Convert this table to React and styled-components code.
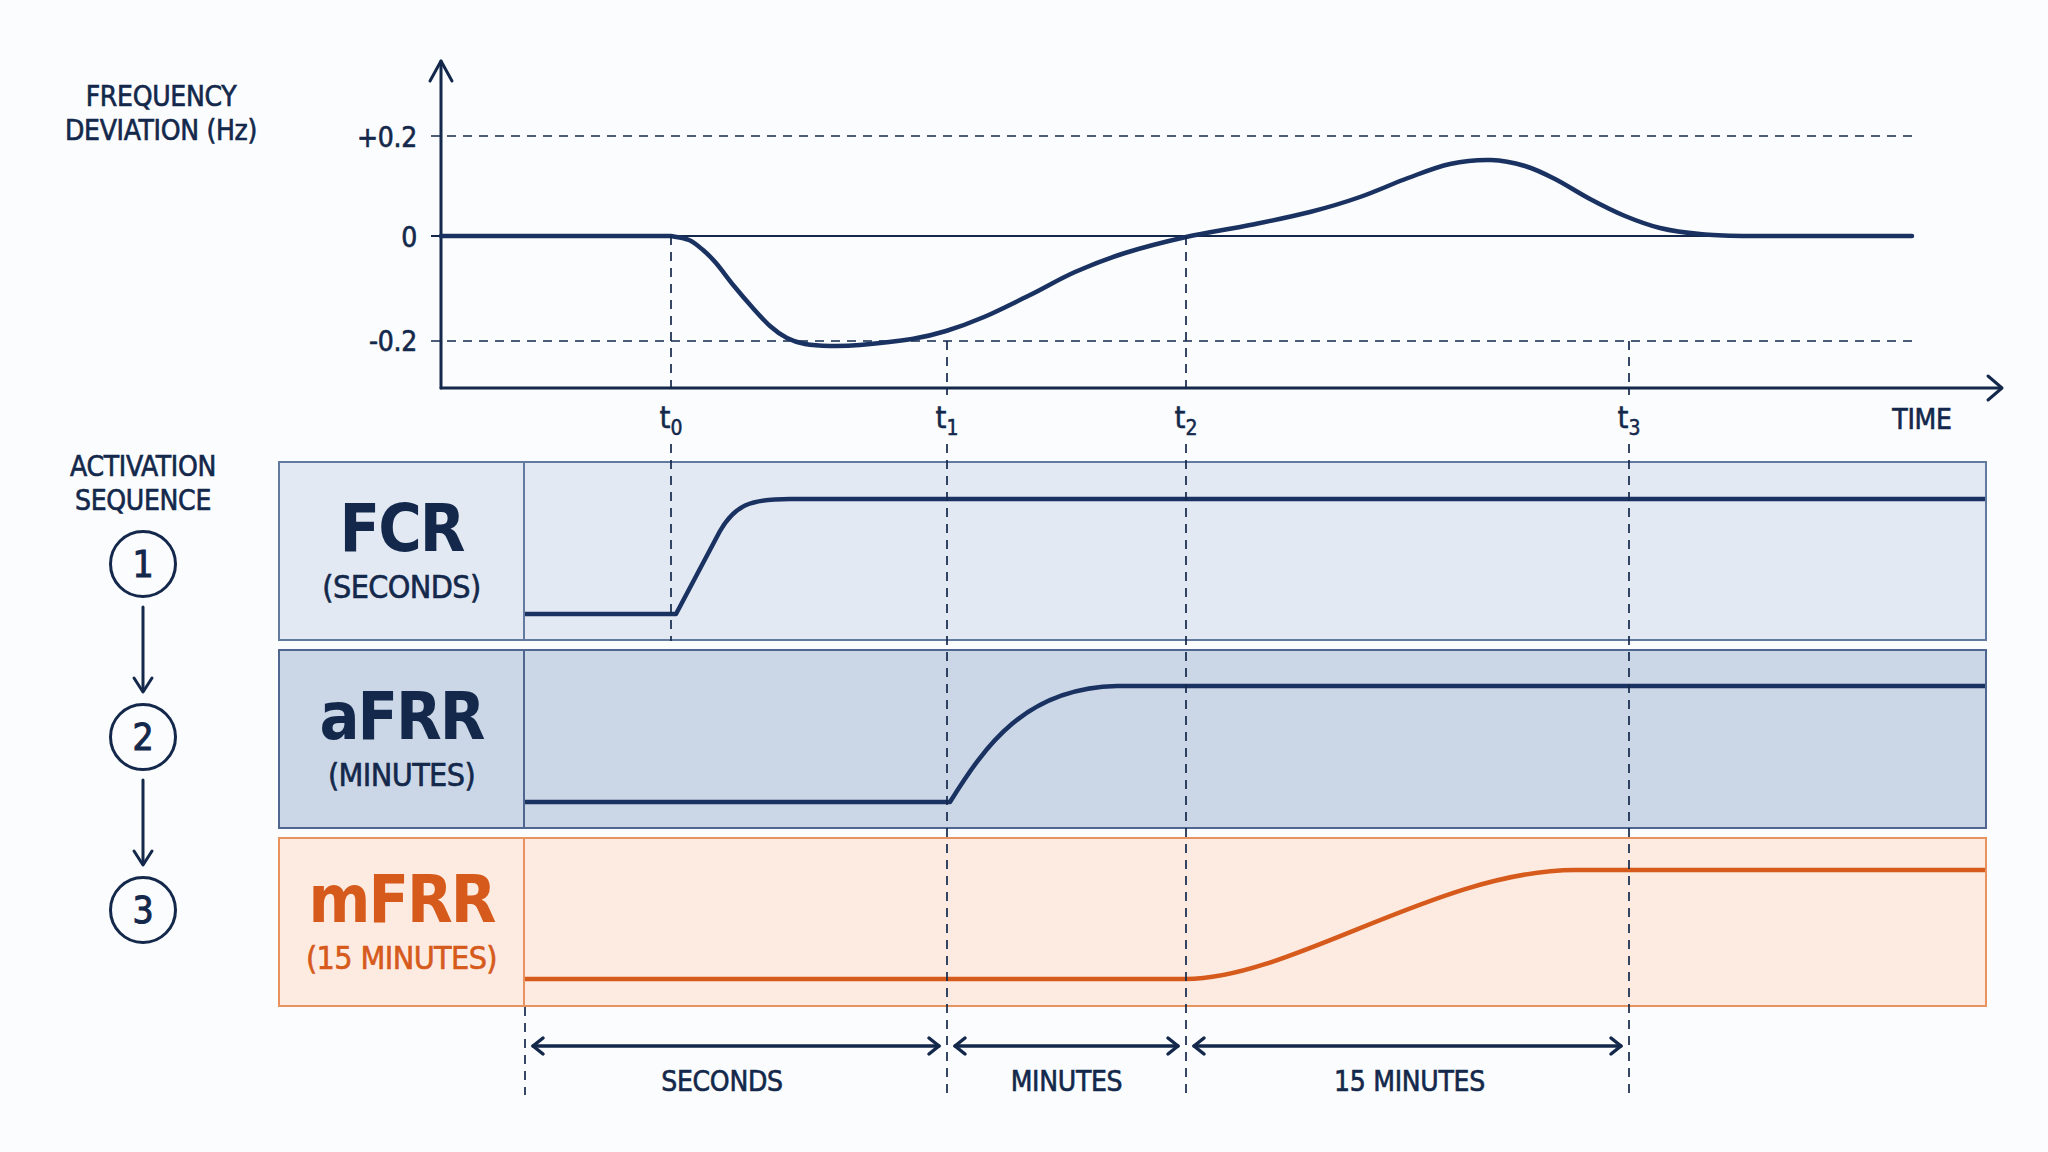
import React from "react";
import styled, { createGlobalStyle } from "styled-components";

const NAVY = "#13284b";
const LINE = "#1a3262";
const ORANGE = "#d65a1b";

const GlobalStyle = createGlobalStyle`
  html, body {
    margin: 0;
    padding: 0;
    background: #fbfcfd;
  }
  body {
    font-family: "DejaVu Sans Condensed", "Liberation Sans Narrow", "DejaVu Sans", sans-serif;
    color: ${NAVY};
  }
`;

const Page = styled.div`
  position: relative;
  width: 2048px;
  height: 1152px;
  overflow: hidden;
  background: #fbfcfd;
`;

// top part: axis title + frequency chart
const Header = styled.div`
  display: grid;
  grid-template-columns: 322px 1726px;
  height: 450px;
`;

const Caption = styled.div`
  text-align: center;
  font-size: 28px;
  line-height: 34px;
  letter-spacing: -0.3px;
  -webkit-text-stroke: 0.6px currentColor;
`;

const AxisTitle = styled(Caption)`
  padding-top: 80px;
`;

const TickLabel = styled.text`
  font-size: 28px;
  fill: ${NAVY};
  stroke: ${NAVY};
  stroke-width: 0.6px;
  letter-spacing: -0.3px;
`;

const TLabel = styled.text`
  font-size: 31px;
  fill: ${NAVY};
  stroke: ${NAVY};
  stroke-width: 0.5px;
`;

// middle part: sequence + panels
const Middle = styled.div`
  display: grid;
  grid-template-columns: 278px 1709px;
`;

const Sequence = styled.div`
  display: flex;
  flex-direction: column;
  align-items: center;
  padding: 0 0 0 8px;
`;

const SeqTitle = styled(Caption)`
  margin-bottom: 12px;
`;

const StepCircle = styled.div`
  box-sizing: border-box;
  width: 68px;
  height: 68px;
  border: 3px solid ${NAVY};
  border-radius: 50%;
  display: flex;
  align-items: center;
  justify-content: center;
  font-size: 37px;
  -webkit-text-stroke: 1px currentColor;
`;

const Panels = styled.div`
  display: flex;
  flex-direction: column;
  gap: 8px;
  padding-top: 11px;
`;

const tones = {
  light: { bg: "#e2e9f3", border: "#627a9f", text: NAVY },
  mid: { bg: "#cbd7e6", border: "#4f6690", text: NAVY },
  orange: { bg: "#fdebe1", border: "#e8935f", text: ORANGE },
};

const Panel = styled.div`
  box-sizing: border-box;
  display: flex;
  height: ${(p) => p.$h}px;
  background: ${(p) => tones[p.$tone].bg};
  border: 2px solid ${(p) => tones[p.$tone].border};
  color: ${(p) => tones[p.$tone].text};
`;

const LabelCell = styled.div`
  box-sizing: border-box;
  width: 245px;
  flex: none;
  border-right: 2px solid ${(p) => tones[p.$tone].border};
  display: flex;
  flex-direction: column;
  align-items: center;
  justify-content: center;
`;

const Name = styled.div`
  font-size: 66px;
  line-height: 64px;
  font-weight: 700;
  letter-spacing: -2px;
`;

const Sub = styled.div`
  font-size: 32px;
  line-height: 36px;
  margin-top: 8px;
  letter-spacing: -0.6px;
  -webkit-text-stroke: 0.6px currentColor;
`;

// bottom part: duration arrows
const Durations = styled.div`
  display: flex;
  margin-left: 525px;
  padding-top: 27px;
`;

const Span = styled.div`
  width: ${(p) => p.$w}px;
  display: flex;
  flex-direction: column;
  align-items: center;
`;

const SpanLabel = styled(Caption)`
  margin-top: 7px;
  margin-right: ${(p) => p.$shift || 0}px;
`;

const Guides = styled.svg`
  position: absolute;
  left: 0;
  top: 0;
  pointer-events: none;
`;

const smooth = (pts) => {
  let d = "";
  for (let i = 0; i < pts.length - 1; i++) {
    const p0 = pts[i - 1] || pts[i];
    const p1 = pts[i];
    const p2 = pts[i + 1];
    const p3 = pts[i + 2] || p2;
    const c1 = [p1[0] + (p2[0] - p0[0]) / 6, p1[1] + (p2[1] - p0[1]) / 6];
    const c2 = [p2[0] - (p3[0] - p1[0]) / 6, p2[1] - (p3[1] - p1[1]) / 6];
    d += ` C${c1[0].toFixed(1)},${c1[1].toFixed(1)} ${c2[0].toFixed(1)},${c2[1].toFixed(1)} ${p2[0]},${p2[1]}`;
  }
  return d;
};

const freqPoints = [
  [671, 236], [689, 240], [703, 250], [716, 263], [734, 286], [752, 307],
  [770, 326], [787, 338], [805, 344], [830, 346], [860, 345], [912, 339],
  [946, 331], [984, 317], [1030, 295], [1075, 272], [1125, 253],
  [1186, 237], [1250, 225], [1310, 212], [1360, 197], [1408, 178],
  [1450, 164], [1491, 160], [1525, 166], [1555, 179], [1590, 199],
  [1625, 216], [1660, 228], [1700, 234], [1750, 236], [1912, 236],
];

const freqPath = `M441,236 L671,236` + smooth(freqPoints);

const times = [
  { x: 671, sub: "0" },
  { x: 947, sub: "1" },
  { x: 1186, sub: "2" },
  { x: 1629, sub: "3" },
];

const dash = { stroke: NAVY, strokeWidth: 1.7, strokeDasharray: "9 7" };

function FrequencyChart() {
  return (
    <svg width="1726" height="450" viewBox="322 0 1726 450">
      <line x1="431" x2="1913" y1="136" y2="136" {...dash} />
      <line x1="431" x2="1913" y1="341" y2="341" {...dash} />
      <line x1="431" x2="1913" y1="236" y2="236" stroke={NAVY} strokeWidth="2" />

      <g stroke={NAVY} strokeWidth="3" fill="none" strokeLinecap="round" strokeLinejoin="round">
        <path d="M441,388 L441,61" />
        <path d="M430,81 L441,61 L452,81" />
        <path d="M441,388 L2001,388" />
        <path d="M1988,376 L2002,388 L1988,400" />
      </g>

      <TickLabel x="417" y="147" textAnchor="end">+0.2</TickLabel>
      <TickLabel x="417" y="247" textAnchor="end">0</TickLabel>
      <TickLabel x="417" y="351" textAnchor="end">-0.2</TickLabel>

      <path d={freqPath} stroke={LINE} strokeWidth="4.5" fill="none" strokeLinecap="round" />

      {times.map((t) => (
        <TLabel key={t.sub} x={t.x} y="428" textAnchor="middle">
          t<tspan fontSize="21" dy="7">{t.sub}</tspan>
        </TLabel>
      ))}
      <TickLabel x="1922" y="429" textAnchor="middle">TIME</TickLabel>
    </svg>
  );
}

function SeqArrow() {
  return (
    <svg width="24" height="105" viewBox="0 0 24 105">
      <g stroke={NAVY} strokeWidth="3" fill="none" strokeLinecap="round" strokeLinejoin="round">
        <path d="M12,9 L12,93" />
        <path d="M3,80 L12,94 L21,80" />
      </g>
    </svg>
  );
}

// one activation panel: label on the left, response curve on the right
function ReservePanel({ tone, height, name, sub, path }) {
  const inner = height - 4;
  return (
    <Panel $tone={tone} $h={height}>
      <LabelCell $tone={tone}>
        <Name>{name}</Name>
        <Sub>{sub}</Sub>
      </LabelCell>
      <svg width="1460" height={inner} viewBox={`525 0 1460 ${inner}`}>
        <path
          d={path}
          stroke={tone === "orange" ? ORANGE : LINE}
          strokeWidth="4.5"
          fill="none"
          strokeLinejoin="round"
        />
      </svg>
    </Panel>
  );
}

function DurationArrow({ w }) {
  const end = w - 8;
  return (
    <svg width={w} height="24" viewBox={`0 0 ${w} 24`}>
      <g stroke={NAVY} strokeWidth="3.5" fill="none" strokeLinecap="round" strokeLinejoin="round">
        <path d={`M8,12 L${end},12`} />
        <path d={`M18,4 L8,12 L18,20`} />
        <path d={`M${end - 10},4 L${end},12 L${end - 10},20`} />
      </g>
    </svg>
  );
}

const spans = [
  { w: 422, label: "SECONDS", shift: 28 },
  { w: 239, label: "MINUTES", shift: 0 },
  { w: 443, label: "15 MINUTES", shift: -4 },
];

// dashed time markers: [x, from, to]
const guideLines = [
  [671, 236, 641],
  [947, 341, 1095],
  [1186, 236, 1095],
  [1629, 341, 1095],
];

export default function App() {
  return (
    <Page>
      <GlobalStyle />
      <Header>
        <AxisTitle>
          FREQUENCY
          <br />
          DEVIATION (Hz)
        </AxisTitle>
        <FrequencyChart />
      </Header>

      <Middle>
        <Sequence>
          <SeqTitle>
            ACTIVATION
            <br />
            SEQUENCE
          </SeqTitle>
          <StepCircle>1</StepCircle>
          <SeqArrow />
          <StepCircle>2</StepCircle>
          <SeqArrow />
          <StepCircle>3</StepCircle>
        </Sequence>

        <Panels>
          <ReservePanel
            tone="light"
            height={180}
            name="FCR"
            sub="(SECONDS)"
            path="M525,151 L676,151 L720,68 C735,42 750,36 790,36 L1985,36"
          />
          <ReservePanel
            tone="mid"
            height={180}
            name="aFRR"
            sub="(MINUTES)"
            path="M525,151 L950,151 C985,95 1025,37 1117,35 L1985,35"
          />
          <ReservePanel
            tone="orange"
            height={170}
            name="mFRR"
            sub="(15 MINUTES)"
            path="M525,140 L1186,140 C1290,140 1440,31 1575,31 L1985,31"
          />
        </Panels>
      </Middle>

      <Durations>
        {spans.map((s) => (
          <Span key={s.label} $w={s.w}>
            <DurationArrow w={s.w} />
            <SpanLabel $shift={s.shift}>{s.label}</SpanLabel>
          </Span>
        ))}
      </Durations>

      <Guides width="2048" height="1152" viewBox="0 0 2048 1152">
        {guideLines.map(([x, y1, y2]) => (
          <g key={x}>
            <line x1={x} x2={x} y1={y1} y2="395" {...dash} />
            <line x1={x} x2={x} y1="444" y2={y2} {...dash} />
          </g>
        ))}
        <line x1="525" x2="525" y1="1007" y2="1095" {...dash} />
      </Guides>
    </Page>
  );
}
